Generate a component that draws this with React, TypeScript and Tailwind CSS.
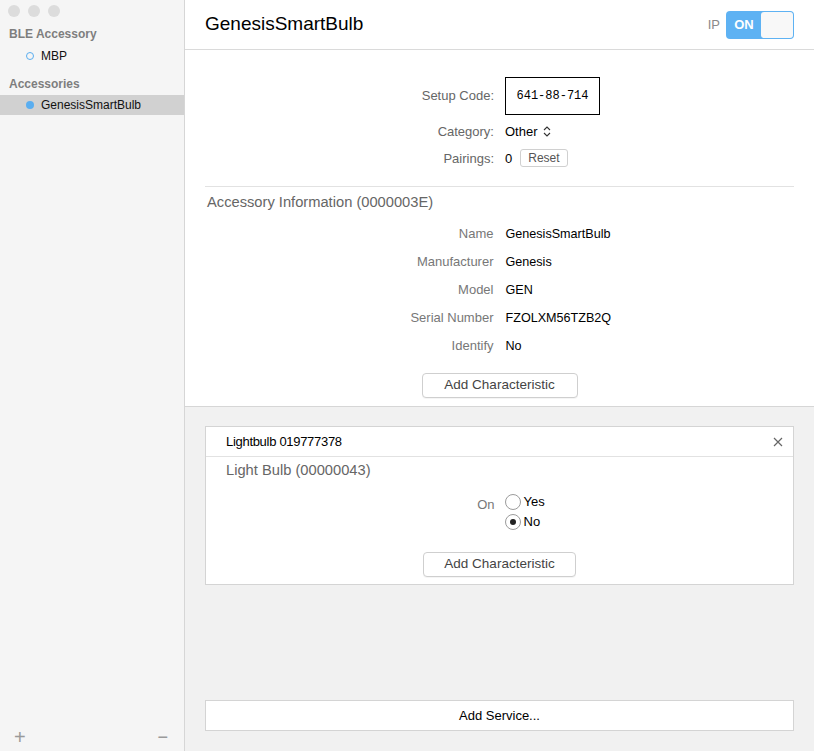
import React from "react";

const infoRows = [
  { label: "Name", value: "GenesisSmartBulb" },
  { label: "Manufacturer", value: "Genesis" },
  { label: "Model", value: "GEN" },
  { label: "Serial Number", value: "FZOLXM56TZB2Q" },
  { label: "Identify", value: "No" },
];

const Sidebar: React.FC = () => (
  <div className="w-[185px] shrink-0 bg-[#f5f5f5] border-r border-[#d6d6d6] flex flex-col">
    <div className="flex gap-2 pl-2 pt-[5px]">
      <span className="w-3 h-3 rounded-full bg-[#dcdcdc]" />
      <span className="w-3 h-3 rounded-full bg-[#dcdcdc]" />
      <span className="w-3 h-3 rounded-full bg-[#dcdcdc]" />
    </div>
    <div className="pl-[9px] mt-[9px] text-[12px] font-bold text-[#7e7e7e] leading-[16px]">BLE Accessory</div>
    <div className="flex items-center h-5 mt-[4px] pl-[26px]">
      <span className="w-[8px] h-[8px] rounded-full border-[1.5px] border-[#5aaef0] mr-[7px]" />
      <span className="text-[12px] text-[#111]">MBP</span>
    </div>
    <div className="pl-[9px] mt-[10px] text-[12px] font-bold text-[#7e7e7e] leading-[16px]">Accessories</div>
    <div className="flex items-center h-[20px] mt-[3px] pl-[26px] bg-[#d1d1d1]">
      <span className="w-[8px] h-[8px] rounded-full bg-[#5aaef0] mr-[7px]" />
      <span className="text-[12px] text-[#111]">GenesisSmartBulb</span>
    </div>
    <div className="flex-1" />
    <div className="flex items-center justify-between pl-[14px] pr-[16px] pb-[4px] text-[#9a9a9a]">
      <span className="text-[20px] leading-none font-light">+</span>
      <span className="text-[18px] leading-none">−</span>
    </div>
  </div>
);

const Button: React.FC<{ label: string; className?: string }> = ({ label, className }) => (
  <button className={`h-[25px] bg-white border border-[#cfcfcf] rounded-[4px] text-[13.5px] text-[#444] shadow-[0_1px_0_rgba(0,0,0,0.04)] ${className ?? ""}`}>
    {label}
  </button>
);

export default function App() {
  return (
    <div className="flex w-[814px] h-[751px] overflow-hidden font-['Liberation_Sans',Arial,sans-serif]">
      <Sidebar />
      <div className="flex-1 flex flex-col bg-[#f1f1f1]">
        <div className="h-[50px] shrink-0 bg-white border-b border-[#dadada] flex items-center justify-between pl-5 pr-5">
          <span className="text-[19px] text-black">GenesisSmartBulb</span>
          <div className="flex items-center gap-[6px]">
            <span className="text-[13px] text-[#8a8a8a]">IP</span>
            <div className="flex w-[68px] h-[28px] rounded-[4px] bg-[#5eb2f3] p-px">
              <span className="w-[34px] flex items-center justify-center text-[13px] font-bold text-white">ON</span>
              <span className="flex-1 rounded-[3px] bg-[#f8f8f8]" />
            </div>
          </div>
        </div>

        <div className="bg-white border-b border-[#d6d6d6] px-5 pt-[27px] pb-[8px]">
          <div className="grid grid-cols-2 gap-x-[11px] items-center text-[13px]">
            <span className="text-right text-[#666]">Setup Code:</span>
            <div>
              <div className="w-[95px] h-[38px] border border-black flex items-center justify-center font-['Liberation_Mono',monospace] text-[12px] text-black">
                641-88-714
              </div>
            </div>
            <span className="text-right text-[#666] mt-[7px]">Category:</span>
            <span className="text-black mt-[7px] flex items-center gap-[5px]">
              Other
              <svg width="8" height="11" viewBox="0 0 8 11" fill="none" stroke="#333" strokeWidth="1.1">
                <path d="M1 4 L4 1 L7 4" />
                <path d="M1 7 L4 10 L7 7" />
              </svg>
            </span>
            <span className="text-right text-[#666] mt-[7px]">Pairings:</span>
            <span className="text-black mt-[7px] flex items-center gap-[8px]">
              0
              <span className="h-[18px] px-[7px] border border-[#d0d0d0] rounded-[3px] text-[12px] text-[#555] flex items-center">Reset</span>
            </span>
          </div>

          <div className="border-t border-[#e2e2e2] mt-[18px] pt-[7px]">
            <div className="pl-[2px] text-[14.7px] leading-[16px] text-[#666]">Accessory Information (0000003E)</div>
            <div className="grid grid-cols-2 gap-x-[12px] mt-[10px] text-[13px]">
              {infoRows.map(({ label, value }) => (
                <React.Fragment key={label}>
                  <span className="h-[28px] flex items-center justify-end text-[#777]">{label}</span>
                  <span className="h-[28px] flex items-center text-black text-[12.6px]">{value}</span>
                </React.Fragment>
              ))}
            </div>
            <div className="flex justify-center mt-[13px]">
              <Button label="Add Characteristic" className="w-[156px]" />
            </div>
          </div>
        </div>

        <div className="flex-1 flex flex-col px-5 pt-[19px] pb-5">
          <div className="bg-white border border-[#d4d4d4]">
            <div className="h-[30px] border-b border-[#e2e2e2] flex items-center justify-between pl-5 pr-[10px]">
              <span className="text-[13px] tracking-[-0.3px] text-black">Lightbulb 019777378</span>
              <svg width="10" height="10" viewBox="0 0 10 10" stroke="#666" strokeWidth="1.2">
                <path d="M1 1 L9 9 M9 1 L1 9" />
              </svg>
            </div>
            <div className="pl-5 pt-[4px] text-[14.7px] leading-[18px] text-[#666]">Light Bulb (00000043)</div>
            <div className="grid grid-cols-2 gap-x-[10px] mt-[13px] text-[13px]">
              <span className="text-right text-[#777] pt-[3px]">On</span>
              <div className="flex flex-col">
                <label className="h-5 flex items-center gap-[3px] text-black">
                  <span className="w-4 h-4 rounded-full border border-[#9c9c9c] bg-white" />
                  Yes
                </label>
                <label className="h-5 flex items-center gap-[3px] text-black">
                  <span className="w-4 h-4 rounded-full border border-[#9c9c9c] bg-white flex items-center justify-center">
                    <span className="w-[6px] h-[6px] rounded-full bg-[#222]" />
                  </span>
                  No
                </label>
              </div>
            </div>
            <div className="flex justify-center mt-[20px] mb-[7px]">
              <Button label="Add Characteristic" className="w-[153px]" />
            </div>
          </div>
          <div className="flex-1" />
          <button className="h-[31px] bg-white border border-[#d4d4d4] text-[13px] text-black">Add Service...</button>
        </div>
      </div>
    </div>
  );
}
